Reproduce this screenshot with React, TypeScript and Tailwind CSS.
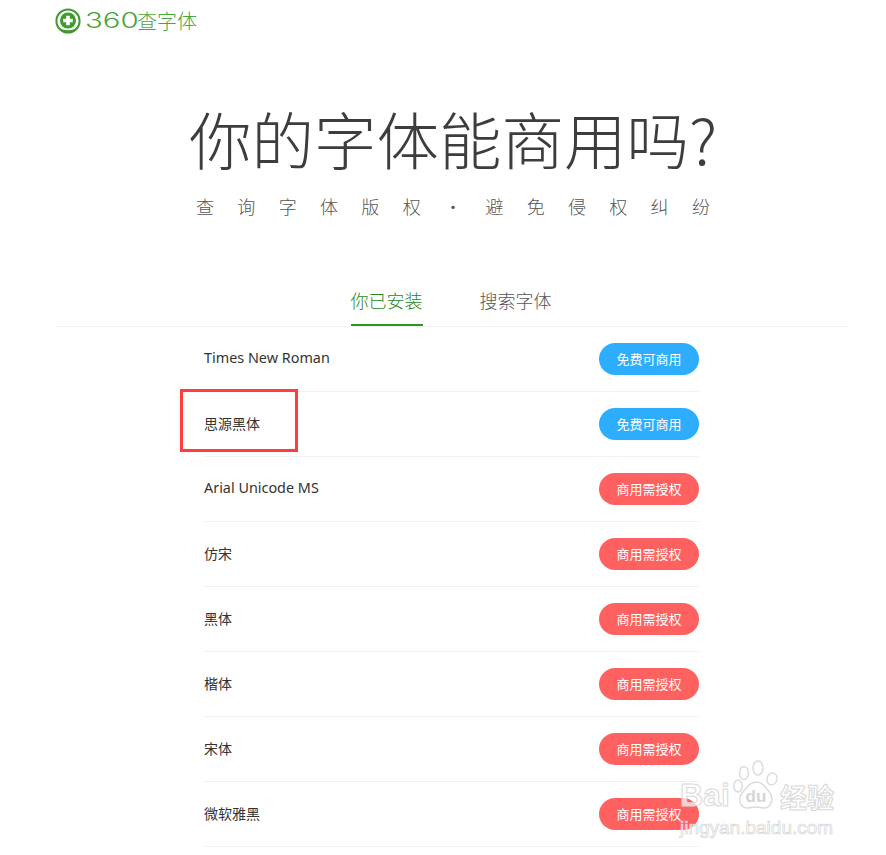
const rows: [string, boolean][] = [
  ["Times New Roman", true],
  ["思源黑体", true],
  ["Arial Unicode MS", false],
  ["仿宋", false],
  ["黑体", false],
  ["楷体", false],
  ["宋体", false],
  ["微软雅黑", false],
];

const slogan = ["查", "询", "字", "体", "版", "权", "·", "避", "免", "侵", "权", "纠", "纷"];

function Logo() {
  return (
    <div className="flex items-center h-[42px] pl-[55px] pb-[1px]">
      <svg width="26" height="26" viewBox="0 0 26 26" className="shrink-0">
        <circle cx="13" cy="13" r="11.6" fill="none" stroke="#3f9b2e" strokeWidth="2" />
        <path d="M3 19 A12 12 0 0 0 23 19 A14 11 0 0 1 3 19Z" fill="#3f9b2e" />
        <circle cx="13" cy="12.5" r="8" fill="#3f9b2e" />
        <path d="M11.2 7.800h3.600v3h3v3.400h-3v3h-3.600v-3h-3v-3.400h3z" fill="#fff" />
      </svg>
      <span className="ml-[4px] w-[52px] inline-block origin-left scale-x-[1.4] text-[21px] font-light leading-none text-[#49a63a] font-['Inter',sans-serif]">360</span>
      <span className="text-[20px] leading-none text-[#49a63a] font-light">查字体</span>
    </div>
  );
}

function Watermark() {
  return (
    <div className="absolute left-[680px] top-[758px] w-[160px] flex flex-col gap-[8px] pointer-events-none font-['Liberation_Sans',sans-serif]">
      <div className="flex items-end h-[54px]">
        <span className="w-[53px] text-[32px] font-bold leading-[32px] pb-[1px] text-white/70 [-webkit-text-stroke:1px_#d8d8d8]">Bai</span>
        <svg width="47" height="52" viewBox="0 0 47 52" className="shrink-0" fill="#ffffff" fillOpacity="0.55" stroke="#dcdcdc" strokeWidth="1.5">
          <ellipse cx="11" cy="13" rx="4.500" ry="6.500" />
          <ellipse cx="25" cy="8" rx="5" ry="7" />
          <ellipse cx="39" cy="19" rx="5" ry="6" transform="rotate(20 39 19)" />
          <ellipse cx="5" cy="26" rx="4.200" ry="6" />
          <path d="M23 22c7 0 10 6 14 11 4 6 1 15-6 15-3 0-5-1-8-1s-6 1-9 1c-7 0-9-9-5-15 4-4 7-11 14-11z" />
          <text x="23" y="42" textAnchor="middle" fontSize="17" fontWeight="700" fill="#d4d4d4" fillOpacity="1" stroke="none">du</text>
        </svg>
        <span className="text-[27px] font-bold leading-[30px] text-white/70 [-webkit-text-stroke:1px_#d8d8d8] font-['Noto_Sans_CJK_SC',sans-serif]">经验</span>
      </div>
      <span className="text-[19px] leading-[16px] whitespace-nowrap text-white/70 [-webkit-text-stroke:0.7px_#d4d4d4]">jingyan.baidu.com</span>
    </div>
  );
}

export default function App() {
  return (
    <div className="relative w-[886px] h-[855px] overflow-hidden bg-white font-['Noto_Sans_CJK_SC','Noto_Sans',sans-serif]">
      <Logo />
      <h1 className="mt-[53px] flex justify-center pl-[20px] text-[62.500px] leading-[86px] font-light text-[#3d3d3d] whitespace-nowrap">
        你的字体能商用吗?
      </h1>
      <div className="mt-[12px] ml-[196px] w-[514px] flex justify-between text-[18px] leading-[26px] font-light text-[#555] whitespace-nowrap">
        {slogan.map((c, i) => (
          <span key={i} className="w-[18px] text-center">{c}</span>
        ))}
      </div>

      <div className="mt-[59px] mx-[56px] w-[792px] h-[49px] flex justify-center gap-[57px] border-b border-[#f1f1f1] pr-[2px]">
        <div className="h-[48px] w-[72px] border-b-2 border-[#2f9420] text-[18px] leading-[44px] font-light text-[#268a18] whitespace-nowrap">你已安装</div>
        <div className="h-[48px] w-[72px] text-[18px] leading-[44px] font-light text-[#555] whitespace-nowrap">搜索字体</div>
      </div>

      <div className="ml-[204px] w-[495px]">
        {rows.map(([name, free]) => (
          <div key={name} className="h-[65px] flex items-center justify-between border-b border-[#f1f1f1]">
            <span className={`pb-[2px] text-[#333] ${/[a-z]/.test(name) ? "text-[14.400px] font-['Noto_Sans',sans-serif]" : "text-[14px]"}`}>{name}</span>
            <span className={`w-[100px] h-[32px] rounded-full flex items-center justify-center text-[13px] text-white whitespace-nowrap ${free ? "bg-[#2eadff]" : "bg-[#ff6060]"}`}>
              {free ? "免费可商用" : "商用需授权"}
            </span>
          </div>
        ))}
      </div>

      <div className="absolute left-[180px] top-[389px] w-[118px] h-[63px] border-[3px] border-[#ff3d3d]" />
      <Watermark />
    </div>
  );
}
